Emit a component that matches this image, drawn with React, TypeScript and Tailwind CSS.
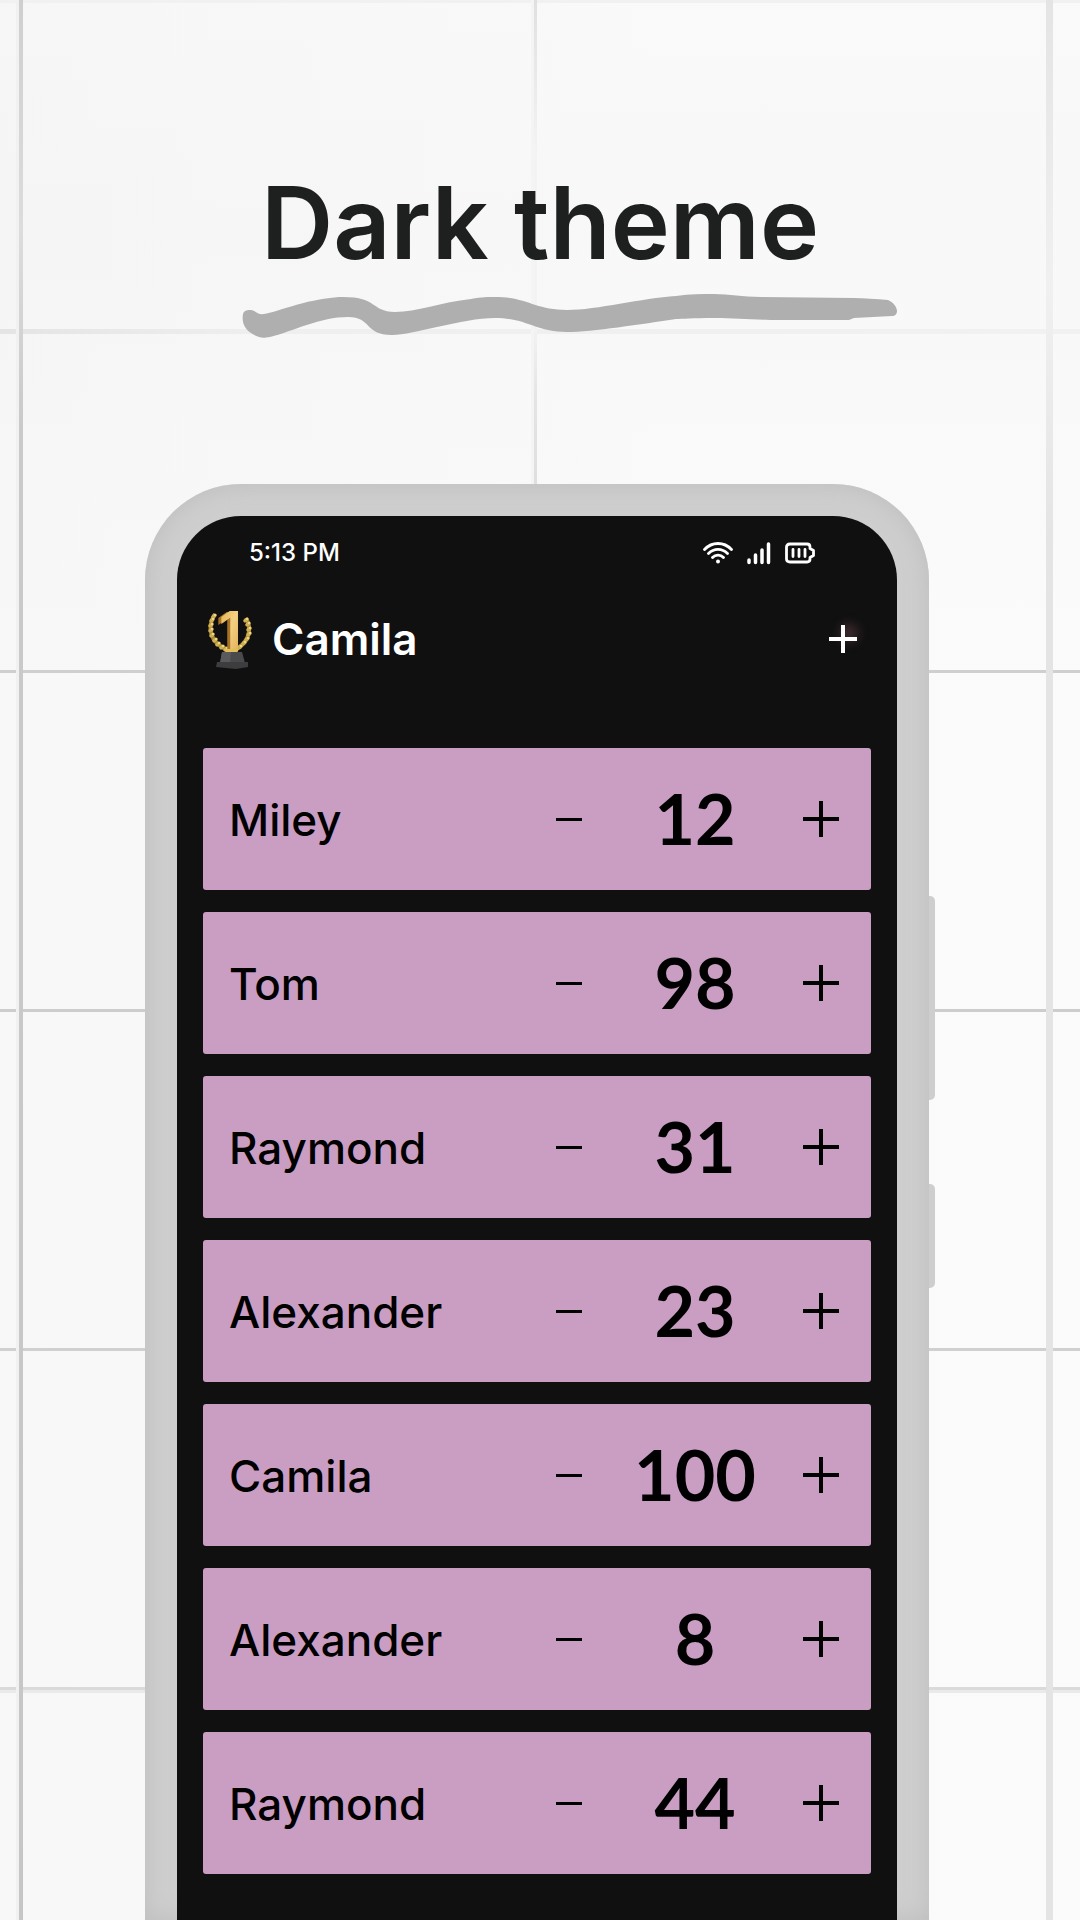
const players = [
  { name: 'Miley', score: 12 },
  { name: 'Tom', score: 98 },
  { name: 'Raymond', score: 31 },
  { name: 'Alexander', score: 23 },
  { name: 'Camila', score: 100 },
  { name: 'Alexander', score: 8 },
  { name: 'Raymond', score: 44 },
]

// white tiled wall behind the phone
function Wall() {
  return (
    <svg
      className="absolute inset-0 -z-10 h-full w-full"
      viewBox="0 0 1080 1920"
      preserveAspectRatio="xMidYMin slice"
      aria-hidden="true"
    >
      <defs>
        <linearGradient id="wall" x1="0" y1="0" x2="0" y2="1">
          <stop offset="0" stopColor="#f8f8f8" />
          <stop offset="0.12" stopColor="#f5f5f5" />
          <stop offset="0.34" stopColor="#fafafa" />
          <stop offset="1" stopColor="#fafafa" />
        </linearGradient>
        <linearGradient id="wallSide" x1="0" y1="0" x2="1" y2="0">
          <stop offset="0" stopColor="#f5f5f5" stopOpacity="0.5" />
          <stop offset="0.6" stopColor="#fbfbfb" stopOpacity="0.5" />
        </linearGradient>
        <linearGradient id="seamLeft" x1="0" y1="0" x2="0" y2="1">
          <stop offset="0" stopColor="#cfcfcf" />
          <stop offset="0.12" stopColor="#dcdcdc" />
          <stop offset="0.22" stopColor="#cacaca" />
          <stop offset="1" stopColor="#c6c6c6" />
        </linearGradient>
        <linearGradient id="seamMiddle" x1="0" y1="0" x2="0" y2="1">
          <stop offset="0" stopColor="#e0e0e0" />
          <stop offset="0.3" stopColor="#f3f3f3" />
          <stop offset="0.65" stopColor="#f3f3f3" />
          <stop offset="0.8" stopColor="#e4e4e4" />
          <stop offset="1" stopColor="#dedede" />
        </linearGradient>
        <linearGradient id="seamRight" x1="0" y1="0" x2="0" y2="1">
          <stop offset="0" stopColor="#e4e4e4" />
          <stop offset="0.15" stopColor="#f0f0f0" />
          <stop offset="0.28" stopColor="#e4e4e4" />
          <stop offset="1" stopColor="#e4e4e4" />
        </linearGradient>
        <linearGradient id="seamTop" x1="0" y1="0" x2="1" y2="0">
          <stop offset="0" stopColor="#e4e4e4" />
          <stop offset="0.25" stopColor="#efefef" />
          <stop offset="1" stopColor="#f1f1f1" />
        </linearGradient>
      </defs>
      <rect width="1080" height="1920" fill="url(#wall)" />
      <rect width="1080" height="1920" fill="url(#wallSide)" />
      <rect y="0" width="1080" height="3" fill="#f1f1f1" />
      <rect y="329" width="1080" height="5" fill="url(#seamTop)" />
      <rect y="670" width="1080" height="3" fill="#cfcfcf" />
      <rect y="1009" width="1080" height="3" fill="#cdcdcd" />
      <rect y="1348" width="1080" height="3" fill="#d0d0d0" />
      <rect y="1687" width="1080" height="3" fill="#dadada" />
      <rect y="1690" width="1080" height="3" fill="#eaeaea" />
      <rect x="16" width="3" height="1920" fill="#f1f1f1" />
      <rect x="19" width="4" height="1920" fill="url(#seamLeft)" />
      <rect x="531" width="3" height="500" fill="#f4f4f4" />
      <rect x="534" width="3" height="500" fill="url(#seamMiddle)" />
      <rect x="1046" width="7" height="1920" fill="url(#seamRight)" />
    </svg>
  )
}

function Squiggle() {
  return (
    <svg className="mt-2.5 ml-[60px] h-[46px] w-[656px]" viewBox="0 0 656 46" aria-hidden="true">
      <path
        fill="#afafaf"
        d="M1 21C2 17 6 17 9 17C13 17 15 22 22 21C36 19 60 7 97 4C137 3 127 18 153 19C174 19 200 9 229 6C240 4 246 4 253 4C285 4 293 17 325 17C355 17 400 5 434 3C448 1 460 1 472 1C488 1 500 4 519 4L612 5C622 5 634 6 646 7C651 9 655 14 655 18C655 21 653 23 650 23L612 25L607 27H537C510 27 495 25 472 25C450 25 440 26 434 26C400 31 350 39 325 39C293 39 285 25 253 25C220 25 172 42 150 42C122 42 130 24 106 24C78 24 52 38 28 44C22 45 20 45 17 44C5 40-1 32 1 21Z"
      />
    </svg>
  )
}

function Trophy() {
  const leaves = [
    [6, 7], [4, 11], [3, 16], [3, 21], [4, 26], [7, 31], [10, 35], [14, 38], [18, 40],
    [38, 11], [40, 15], [41, 20], [41, 25], [39, 30], [36, 34], [32, 38], [27, 40],
  ]
  return (
    <svg className="h-[60px] w-11 overflow-visible" viewBox="0 0 44 60" aria-hidden="true">
      <defs>
        <linearGradient id="gold" x1="0" y1="0" x2="1" y2="1">
          <stop offset="0" stopColor="#e3ad45" />
          <stop offset="0.5" stopColor="#f2cf82" />
          <stop offset="1" stopColor="#dba548" />
        </linearGradient>
      </defs>
      <path d="M7 5C-1 17 1 34 20 41M38 9C45 21 40 35 26 41" fill="none" stroke="#a8872f" strokeWidth="4" />
      {leaves.map(([x, y]) => (
        <g key={`${x}-${y}`}>
          <ellipse cx={x} cy={y} rx="3" ry="2" fill="#cfb052" transform={`rotate(-40 ${x} ${y})`} />
          <circle cx={x + 1} cy={y - 1} r="1" fill="#f3e3a0" />
        </g>
      ))}
      <text x="8" y="41" fontSize="52" fontWeight="700" fontFamily="Inter, sans-serif" fill="#a87424">1</text>
      <text x="11" y="40" fontSize="52" fontWeight="700" fontFamily="Inter, sans-serif" fill="url(#gold)">1</text>
      <path d="M16 40h15l-2 4H18z" fill="#e2bd5a" />
      <path d="M14 43h20l3 11H12z" fill="#4a4a4d" />
      <path d="M14 43h9l-1 11H12z" fill="#5a5a5e" />
      <path d="M9 53h31v5L28 60L8 58z" fill="#3d3d40" />
    </svg>
  )
}

function StatusIcons() {
  return (
    <div className="flex items-center gap-3.5">
      <svg className="h-6 w-[30px]" viewBox="0 0 30 24" fill="none" stroke="#fff" strokeWidth="2.8" strokeLinecap="round" role="img" aria-label="Wi-Fi">
        <path d="M1.500 8.500C9 .5 21 .5 28.500 8.500M5.500 12.500C11 7 19 7 24.500 12.500M9.500 16.500C12.500 13.300 17.500 13.300 20.500 16.500" />
        <circle cx="15" cy="20.500" r="2" fill="#fff" stroke="none" />
      </svg>
      <svg className="h-6 w-6" viewBox="0 0 24 24" stroke="#fff" strokeWidth="3.500" strokeLinecap="round" role="img" aria-label="Signal">
        <path d="M2 19v2.500M8.500 14v7.500M15 9v12.500M21.500 3v18.500" />
      </svg>
      <svg className="h-6 w-[30px]" viewBox="0 0 30 24" fill="none" stroke="#fff" strokeWidth="2.800" strokeLinecap="round" strokeLinejoin="round" role="img" aria-label="Battery">
        <path d="M5 3H22Q25 3 25 6V7.500L28.500 9.500V14.500L25 16.500V18Q25 21 22 21H5Q1.500 21 1.500 18V6Q1.500 3 5 3Z" />
        <path d="M8 8.500v7M14 8.500v7M20 8.500v7" />
      </svg>
    </div>
  )
}

function PlayerRow({ name, score }: { name: string; score: number }) {
  return (
    <li className="flex h-[142px] items-center rounded-[3px] bg-[#ca9dc3] pl-[26px] text-black">
      <span className="flex-1 pt-0.5 text-[44px] leading-[56px] font-medium">{name}</span>
      <button type="button" aria-label={`Remove a point from ${name}`} className="flex h-full w-[100px] items-center justify-center">
        <svg className="h-9 w-9" viewBox="0 0 36 36" stroke="currentColor" strokeWidth="3">
          <path d="M5 18.500h26" />
        </svg>
      </button>
      <output className="w-[152px] pb-0.5 text-center font-[Lato] text-[70px] leading-[80px] font-bold">{score}</output>
      <button type="button" aria-label={`Add a point to ${name}`} className="flex h-full w-[100px] items-center justify-center">
        <svg className="h-9 w-9" viewBox="0 0 36 36" stroke="currentColor" strokeWidth="4">
          <path d="M0 18h36M18 0v36" />
        </svg>
      </button>
    </li>
  )
}

export default function App() {
  return (
    <main className="relative isolate flex min-h-screen flex-col items-center overflow-hidden pt-[163px] font-[Inter,sans-serif]">
      <Wall />
      <h1 className="text-[100px] leading-[120px] font-semibold text-[#1e1f1f]">Dark theme</h1>
      <Squiggle />

      <div className="mt-[145px] flex flex-1">
        <div className="w-[784px] rounded-t-[96px] bg-[#cecece] px-8 pt-8 shadow-[inset_0_0_24px_#bdbdbd]">
          <div className="h-full rounded-t-[64px] bg-[#101010] pb-[46px] text-white">
            <div className="flex h-[74px] items-center justify-between pr-[82px] pl-[72px]">
              <span className="text-[24px] leading-8 font-medium">5:13 PM</span>
              <StatusIcons />
            </div>

            <header className="flex h-[110px] items-center pr-10 pb-3 pl-[31px]">
              <Trophy />
              <h2 className="flex-1 pl-5 text-[44px] leading-[56px] font-semibold">Camila</h2>
              <button type="button" aria-label="Add player" className="relative">
                <span className="absolute top-0 left-3 h-4 w-4 rounded-full bg-[#8a5560]/50 blur-[6px]" />
                <svg className="relative h-7 w-7" viewBox="0 0 28 28" stroke="currentColor" strokeWidth="4">
                  <path d="M0 14h28M14 0v28" />
                </svg>
              </button>
            </header>

            <ul className="flex flex-col gap-[22px] px-[26px] pt-12">
              {players.map((player, index) => (
                <PlayerRow key={index} {...player} />
              ))}
            </ul>
          </div>
        </div>

        {/* volume and power keys */}
        <div className="flex w-1.5 flex-col gap-[84px] pt-[412px]">
          <div className="h-[204px] rounded-r-[5px] bg-[#cecece]" />
          <div className="h-[104px] rounded-r-[5px] bg-[#cecece]" />
        </div>
      </div>
    </main>
  )
}
